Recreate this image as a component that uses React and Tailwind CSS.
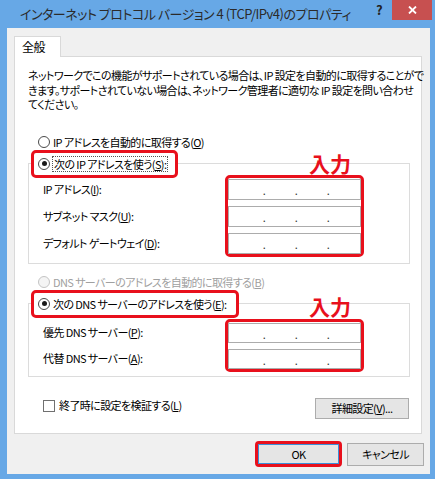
const jp = "[font-family:'Meiryo_UI','Noto_Sans_CJK_JP',sans-serif] [font-feature-settings:'palt']"

function Radio({ checked, disabled }) {
  return (
    <span
      className={`w-[12px] h-[12px] rounded-full border flex items-center justify-center shrink-0 ${
        disabled ? 'border-[#c4c4c4] bg-[#f4f4f4]' : 'border-[#4a4a4a] bg-white'
      }`}
    >
      {checked && <span className="w-[5px] h-[5px] rounded-full bg-[#1a1a1a]" />}
    </span>
  )
}

function IpBox({ h }) {
  return (
    <div className={`w-full ${h} bg-white border border-[#acacac] flex items-center pl-[19px] text-[#333] text-[11px] leading-[11px]`}>
      <span className="w-[32px] text-center pt-[3px]">.</span>
      <span className="w-[32px] text-center pt-[3px]">.</span>
      <span className="w-[32px] text-center pt-[3px]">.</span>
    </div>
  )
}

function Hint({ top }) {
  return (
    <span className={`absolute left-[81px] ${top} text-[21px] leading-[22px] font-bold tracking-[0px] text-[#e8101c] whitespace-nowrap`}>
      入力
    </span>
  )
}

export default function App() {
  return (
    <div className={`w-[435px] h-[479px] bg-[#67a8e6] flex flex-col text-[11px] tracking-[-0.6px] text-black ${jp}`}>
      {/* title bar */}
      <div className="h-[28px] flex items-start shrink-0">
        <div className="pl-[20px] pt-[5px] text-[13px] leading-[18px] tracking-[-0.5px] text-[#2b2b2b] whitespace-nowrap">
          インターネット プロトコル バージョン 4 (TCP/IPv4)のプロパティ
        </div>
        <div className="ml-auto mr-[10px] pt-[3px] text-[13px] leading-[14px] font-bold text-[#222]">?</div>
        <div className="w-[40px] h-[20px] mr-[3px] bg-[#c75050] flex items-center justify-center">
          <svg width="9" height="8" viewBox="0 0 9 8">
            <path d="M1 0.5 L8 7.5 M8 0.5 L1 7.5" stroke="#fff" strokeWidth="1.8" />
          </svg>
        </div>
      </div>

      {/* body */}
      <div className="flex-1 ml-[7px] mr-[5px] mb-[5px] bg-[#f0f0f0] flex flex-col">
        <div className="pt-[8px] pl-[7px]">
          <div className="relative z-10 -mb-px w-[47px] h-[21px] bg-white border border-b-0 border-[#d9d9d9] pl-[7px] text-[12px] leading-[20px]">
            全般
          </div>
        </div>

        <div className="ml-[7px] w-[408px] h-[378px] bg-white border border-[#d9d9d9] pl-[13px] pr-[11px] pt-[11px]">
          <p className="leading-[14.5px] whitespace-nowrap">
            ネットワークでこの機能がサポートされている場合は、IP 設定を自動的に取得することがで
            <br />
            きます。サポートされていない場合は、ネットワーク管理者に適切な IP 設定を問い合わせ
            <br />
            てください。
          </p>

          <div className="mt-[23px] h-[15px] flex items-center">
            <span className="ml-[10px]"><Radio /></span>
            <span className="ml-[3px] whitespace-nowrap">
              IP アドレスを自動的に取得する(<u>O</u>)
            </span>
          </div>

          <fieldset className="border border-[#dcdcdc] pb-[6px]">
            <legend className="ml-[2px] h-[28px] border-[3px] border-[#e8101c] rounded-[5px] flex items-center pl-[4px] pr-[7px]">
              <Radio checked />
              <span className="ml-[2px] border border-dotted border-[#555] px-[1px] leading-[14px] whitespace-nowrap">
                次の IP アドレスを使う(<u>S</u>):
              </span>
            </legend>
            <div className="-mt-[3px] flex">
              <div className="w-[196px] pl-[14px] pt-[4px] flex flex-col gap-[6px]">
                <div className="h-[21px] flex items-center">IP アドレス(<u>I</u>):</div>
                <div className="h-[21px] flex items-center">サブネット マスク(<u>U</u>):</div>
                <div className="h-[21px] flex items-center">デフォルト ゲートウェイ(<u>D</u>):</div>
              </div>
              <div className="relative w-[139px] border-[3px] border-[#e8101c] rounded-[5px] pt-[1px] flex flex-col gap-[6px]">
                <Hint top="top-[-26px]" />
                <IpBox h="h-[21px]" />
                <IpBox h="h-[21px]" />
                <IpBox h="h-[21px]" />
              </div>
            </div>
          </fieldset>

          <div className="mt-[11px] h-[15px] flex items-center text-[#a0a0a0]">
            <span className="ml-[10px]"><Radio disabled /></span>
            <span className="ml-[3px] whitespace-nowrap">
              DNS サーバーのアドレスを自動的に取得する(<u>B</u>)
            </span>
          </div>

          <fieldset className="border border-[#dcdcdc] pb-[4px]">
            <legend className="ml-[2px] h-[28px] border-[3px] border-[#e8101c] rounded-[5px] flex items-center pl-[4px] pr-[9px]">
              <Radio checked />
              <span className="ml-[3px] leading-[14px] whitespace-nowrap">
                次の DNS サーバーのアドレスを使う(<u>E</u>):
              </span>
            </legend>
            <div className="mt-[1px] flex">
              <div className="w-[196px] pl-[14px] pt-[4px] flex flex-col gap-[6px]">
                <div className="h-[20px] flex items-center">優先 DNS サーバー(<u>P</u>):</div>
                <div className="h-[20px] flex items-center">代替 DNS サーバー(<u>A</u>):</div>
              </div>
              <div className="relative w-[139px] border-[3px] border-[#e8101c] rounded-[5px] pt-[1px] flex flex-col gap-[6px]">
                <Hint top="top-[-27px]" />
                <IpBox h="h-[20px]" />
                <IpBox h="h-[20px]" />
              </div>
            </div>
          </fieldset>

          <div className="mt-[21px] flex justify-between items-start">
            <div className="flex items-center h-[14px] mt-[1px]">
              <span className="ml-[15px] w-[12px] h-[12px] border border-[#707070] bg-white" />
              <span className="ml-[4px] whitespace-nowrap">終了時に設定を検証する(<u>L</u>)</span>
            </div>
            <div className="mr-[1px] w-[94px] h-[21px] bg-[#e5e5e5] border border-[#acacac] flex items-center justify-center whitespace-nowrap">
              詳細設定(<u>V</u>)...
            </div>
          </div>
        </div>

        <div className="mt-[7px] pr-[6px] flex justify-end items-center">
          <div className="w-[87px] h-[26px] border-[3px] border-[#e8101c] rounded-[4px] bg-[#e5e5e5]">
            <div className="w-full h-full border border-[#3c8fd8] flex items-center justify-center">OK</div>
          </div>
          <div className="ml-[5px] w-[77px] h-[23px] bg-[#e5e5e5] border border-[#acacac] flex items-center justify-center">
            キャンセル
          </div>
        </div>
      </div>
    </div>
  )
}
